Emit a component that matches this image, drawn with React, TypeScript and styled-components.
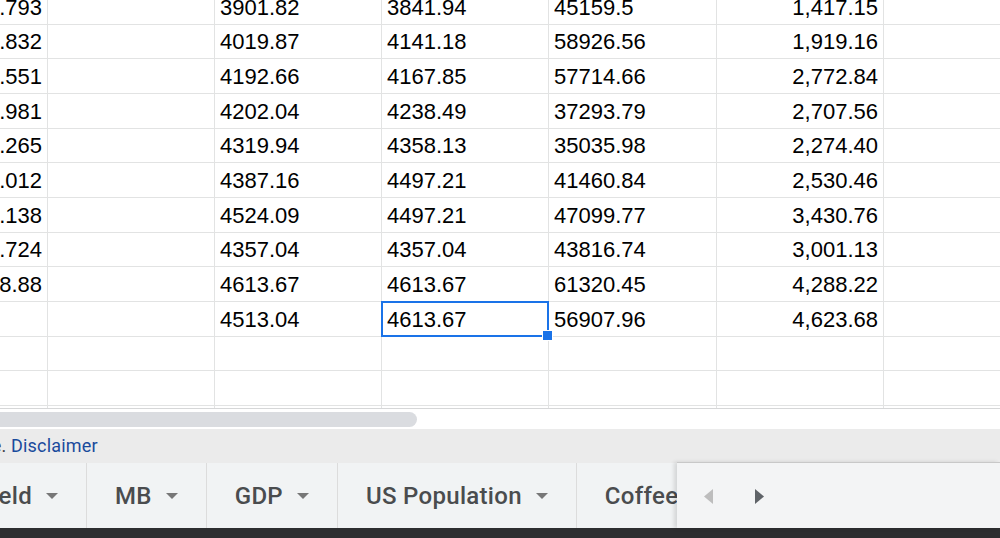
import React from "react";
import styled, { createGlobalStyle } from "styled-components";

const Global = createGlobalStyle`
  html, body { margin: 0; padding: 0; background: #fff; }
  body { overflow: hidden; }
  * { box-sizing: border-box; }
`;

const Page = styled.div`
  width: 1000px;
  height: 538px;
  display: flex;
  flex-direction: column;
  overflow: hidden;
  font-family: "Liberation Sans", Arial, sans-serif;
`;

const GridViewport = styled.div`
  height: 409px;
  overflow: hidden;
  border-bottom: 1px solid #d6d7d8;
  flex: none;
`;

const Grid = styled.div`
  margin-top: -10px;
  margin-left: -119px;
  display: flex;
  flex-direction: column;
`;

const Row = styled.div`
  display: flex;
  height: 34.67px;
  flex: none;
`;

const Cell = styled.div<{ $w: number; $align?: "left" | "right"; $selected?: boolean }>`
  position: relative;
  width: ${(p) => p.$w}px;
  flex: none;
  height: 100%;
  border-right: 1px solid #e2e3e3;
  border-bottom: 1px solid #e2e3e3;
  display: flex;
  align-items: center;
  justify-content: ${(p) => (p.$align === "right" ? "flex-end" : "flex-start")};
  padding: 2px 5px 0 5px;
  font-size: 22px;
  color: #000;
  white-space: nowrap;
  overflow: visible;
  ${(p) =>
    p.$selected &&
    `
    &::after {
      content: "";
      position: absolute;
      left: -1px;
      top: -1px;
      right: -1px;
      bottom: -1px;
      border: 2px solid #1a73e8;
      pointer-events: none;
    }
    &::before {
      content: "";
      position: absolute;
      right: -5px;
      bottom: -5px;
      width: 9px;
      height: 9px;
      background: #1a73e8;
      border: 1px solid #fff;
      z-index: 2;
    }
  `}
`;

const ScrollStrip = styled.div`
  height: 20px;
  flex: none;
  background: #fff;
  padding-top: 3px;
`;

const Thumb = styled.div`
  margin-left: -20px;
  width: 437px;
  height: 15px;
  border-radius: 8px;
  background: #dadce0;
`;

const Footer = styled.div`
  height: 34px;
  flex: none;
  background: #ebebeb;
  display: flex;
  align-items: center;
  font-family: Roboto, "Liberation Sans", sans-serif;
  font-size: 18px;
  letter-spacing: 0.2px;
  color: #3c4043;
  white-space: nowrap;
  padding-bottom: 2px;
`;

const PrefixClip = styled.span`
  display: inline-flex;
  justify-content: flex-end;
  width: 11px;
  overflow: hidden;
`;

const FooterLink = styled.span`
  color: #1a4a9c;
`;

const TabBar = styled.div`
  position: relative;
  height: 65px;
  flex: none;
  background: #f1f3f4;
  display: flex;
  align-items: stretch;
  font-family: Roboto, "Liberation Sans", sans-serif;
  font-weight: 500;
  font-size: 24px;
  letter-spacing: 0.3px;
  color: #4a4c4e;
`;

const Tab = styled.div<{ $w?: number }>`
  display: flex;
  align-items: center;
  justify-content: flex-end;
  gap: 14px;
  padding: 0 28px 0 28px;
  border-right: 1px solid #dcdcdc;
  white-space: nowrap;
  flex: none;
  overflow: hidden;
  ${(p) => (p.$w ? `width: ${p.$w}px; padding-left: 0;` : "")}
`;

const Caret = styled.span`
  width: 0;
  height: 0;
  border-left: 6px solid transparent;
  border-right: 6px solid transparent;
  border-top: 6px solid #777;
  margin-top: 1px;
`;

const NavPanel = styled.div`
  position: absolute;
  top: -1px;
  left: 677px;
  right: 0;
  bottom: 0;
  background: #f3f4f5;
  border-top: 1px solid #c8c8c8;
  box-shadow: -3px 0 4px rgba(0, 0, 0, 0.12);
  display: flex;
  align-items: center;
  gap: 42px;
  padding-left: 27px;
  padding-top: 2px;
`;

const DarkBar = styled.div`
  height: 10px;
  flex: none;
  background: #2d2e30;
`;

const Arrow = ({ dir, color }: { dir: "left" | "right"; color: string }) => (
  <svg width="9" height="15" viewBox="0 0 9 15">
    {dir === "left" ? (
      <path d="M9 0 L0 7.5 L9 15 Z" fill={color} />
    ) : (
      <path d="M0 0 L9 7.5 L0 15 Z" fill={color} />
    )}
  </svg>
);

const widths = [167, 167, 167, 167, 168, 167, 167];

type RowData = [string, string, string, string, string, string];

const rows: RowData[] = [
  ["0.793", "", "3901.82", "3841.94", "45159.5", "1,417.15"],
  ["0.832", "", "4019.87", "4141.18", "58926.56", "1,919.16"],
  ["0.551", "", "4192.66", "4167.85", "57714.66", "2,772.84"],
  ["0.981", "", "4202.04", "4238.49", "37293.79", "2,707.56"],
  ["1.265", "", "4319.94", "4358.13", "35035.98", "2,274.40"],
  ["1.012", "", "4387.16", "4497.21", "41460.84", "2,530.46"],
  ["1.138", "", "4524.09", "4497.21", "47099.77", "3,430.76"],
  ["1.724", "", "4357.04", "4357.04", "43816.74", "3,001.13"],
  ["18.88", "", "4613.67", "4613.67", "61320.45", "4,288.22"],
  ["", "", "4513.04", "4613.67", "56907.96", "4,623.68"],
  ["", "", "", "", "", ""],
  ["", "", "", "", "", ""],
  ["", "", "", "", "", ""],
];

const aligns: ("left" | "right")[] = ["right", "left", "left", "left", "left", "right", "left"];

export default function App() {
  return (
    <Page>
      <Global />
      <GridViewport>
        <Grid>
          {rows.map((r, ri) => (
            <Row key={ri}>
              {[...r, ""].map((v, ci) => (
                <Cell
                  key={ci}
                  $w={widths[ci]}
                  $align={aligns[ci]}
                  $selected={ri === 9 && ci === 3}
                >
                  {v}
                </Cell>
              ))}
            </Row>
          ))}
        </Grid>
      </GridViewport>
      <ScrollStrip>
        <Thumb />
      </ScrollStrip>
      <Footer>
        <PrefixClip>use.&nbsp;</PrefixClip>
        <FooterLink>Disclaimer</FooterLink>
      </Footer>
      <TabBar>
        <Tab $w={87}>
          Yield <Caret />
        </Tab>
        <Tab>
          MB <Caret />
        </Tab>
        <Tab>
          GDP <Caret />
        </Tab>
        <Tab>
          US Population <Caret />
        </Tab>
        <Tab>
          Coffee <Caret />
        </Tab>
        <NavPanel>
          <Arrow dir="left" color="#bdbdbd" />
          <Arrow dir="right" color="#5f6368" />
        </NavPanel>
      </TabBar>
      <DarkBar />
    </Page>
  );
}
